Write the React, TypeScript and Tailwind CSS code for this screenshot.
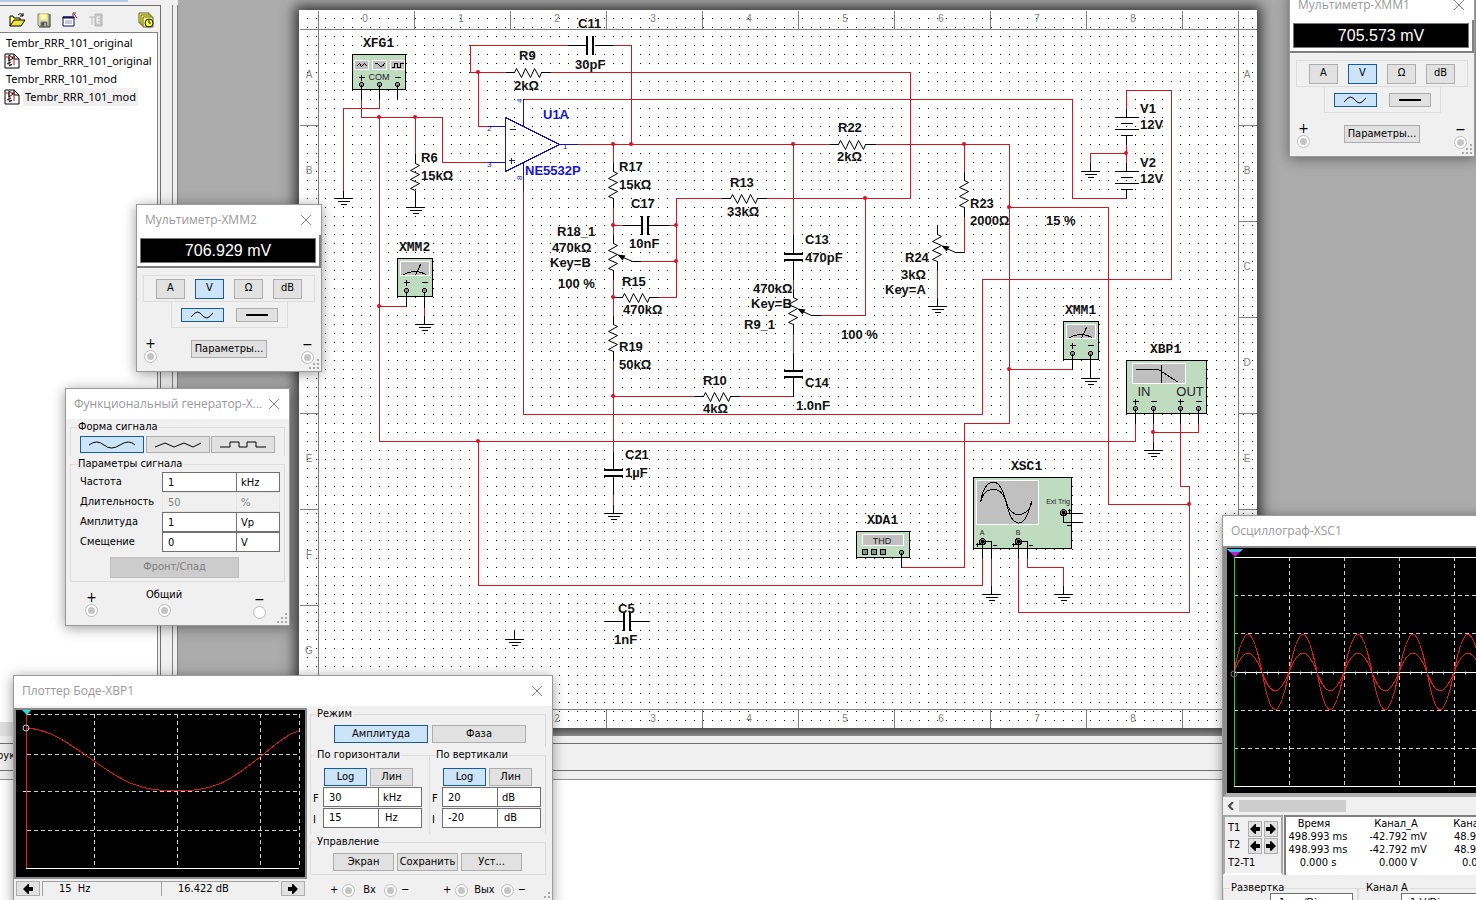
import type { ReactNode } from 'react';

const wires = [
  'M361 99V117H442V162H487',
  'M379 99V108H343V190',
  'M379 117V441H1135V423',
  'M415 117V153',
  'M567 45H470V72H505',
  'M613 45H631V144',
  'M478 72V126H487',
  'M550 72H910V198H766',
  'M523 99H1072V198H1126',
  'M523 190V414H982V279H1171V90H1126V108',
  'M577 144H829',
  'M875 144H1009V423H964V567H901',
  'M613 144V162',
  'M613 207V234',
  'M613 225H622',
  'M668 225H676',
  'M613 279V315',
  'M658 297H676V198H721',
  'M640 261H676',
  'M613 360V451',
  'M613 494V504',
  'M613 396H694',
  'M739 396H793',
  'M793 144V234',
  'M793 279V288',
  'M793 334V352',
  'M820 315H865V198',
  'M964 144V171',
  'M964 216V252',
  'M937 270V297',
  'M1009 207H1108V504H1189',
  'M1009 369H1072',
  'M1126 144V162',
  'M1126 153H1090V162',
  'M379 306H406',
  'M424 307V315',
  'M1153 423V441',
  'M1153 432H1198V423',
  'M1180 423V486H1189V612H1018V558',
  'M478 441V585H982V558',
  'M991 558V585',
  'M1027 558V567H1063V585',
];

const leads = [
  'M361 84V99M379 84V99M397 84V99',
  'M343 190V198M415 153V163M415 190V207',
  'M567 45H587M594 45H613',
  'M505 72H514M541 72H550',
  'M613 162V171M613 198V207',
  'M622 225H642M649 225H668',
  'M613 234V243M613 270V279M613 297H622M649 297H658',
  'M613 315V324M613 351V360',
  'M613 451V470M613 477V494M613 504V513',
  'M721 198H730M757 198H766M694 396H703M730 396H739',
  'M793 234V254M793 261V279M793 288V297M793 324V334M793 352V371M793 378V396',
  'M829 144H838M865 144H875',
  'M964 171V180M964 207V216M937 225V234M937 261V270M937 297V306',
  'M1126 108V117M1126 135V144M1126 162V171M1126 189V198M1090 162V171',
  'M1114 117H1138M1120 123H1132M1114 129H1138M1120 135H1132',
  'M1114 171H1138M1120 177H1132M1114 183H1138M1120 189H1132',
  'M406 291V306M424 291V307M424 315V324',
  'M1072 353V369M1090 353V378',
  'M1135 408V423M1153 408V423M1153 441V450M1180 408V423M1198 408V423',
  'M901 552V567',
  'M982 541V558M982 541H991V558M991 585V594',
  'M1018 541V558M1018 541H1027V558M1063 585V594',
  'M1063 513H1082M1063 513V522H1082',
  'M604 621H624M631 621H649M514 630V639',
];

const junctions = [
  [379, 117], [415, 117], [478, 72], [613, 144], [631, 144], [793, 144], [964, 144],
  [613, 225], [676, 225], [676, 261], [613, 297], [613, 396], [865, 198], [1009, 207],
  [1009, 369], [1126, 153], [379, 306], [478, 441], [1153, 432], [1189, 504],
];

const grounds = [
  [343, 198], [415, 207], [613, 513], [514, 639], [937, 306], [1090, 171], [424, 324],
  [1090, 378], [1153, 450], [991, 594], [1063, 594],
];

const horizontalResistors = [[514, 72], [622, 297], [730, 198], [703, 396], [838, 144]];
const verticalResistors = [[415, 163], [613, 171], [613, 243], [613, 324], [793, 297], [964, 180], [937, 234]];

const labels: [number, number, string][] = [
  [578, 28, 'C11'], [575, 69, '30pF'], [519, 60, 'R9'], [514, 90, '2kΩ'],
  [421, 162, 'R6'], [421, 180, '15kΩ'], [619, 171, 'R17'], [619, 189, '15kΩ'],
  [631, 208, 'C17'], [629, 248, '10nF'], [557, 236, 'R18_1'], [552, 252, '470kΩ'],
  [550, 267, 'Key=B'], [558, 288, '100 %'], [622, 286, 'R15'], [623, 314, '470kΩ'],
  [619, 351, 'R19'], [619, 369, '50kΩ'], [703, 385, 'R10'], [703, 413, '4kΩ'],
  [805, 387, 'C14'], [796, 410, '1.0nF'], [744, 329, 'R9_1'], [751, 308, 'Key=B'],
  [753, 293, '470kΩ'], [805, 244, 'C13'], [805, 262, '470pF'], [841, 339, '100 %'],
  [905, 262, 'R24'], [901, 279, '3kΩ'], [885, 294, 'Key=A'], [730, 187, 'R13'],
  [727, 216, '33kΩ'], [838, 132, 'R22'], [837, 161, '2kΩ'], [970, 208, 'R23'],
  [970, 225, '2000Ω'], [1046, 225, '15 %'], [1140, 113, 'V1'], [1140, 129, '12V'],
  [1140, 167, 'V2'], [1140, 183, '12V'], [625, 459, 'C21'], [625, 477, '1µF'],
  [618, 613, 'C5'], [614, 644, '1nF'],
];

const instrumentLabels: [number, number, string][] = [
  [363, 47, 'XFG1'], [399, 251, 'XMM2'], [1065, 314, 'XMM1'],
  [1150, 353, 'XBP1'], [1011, 470, 'XSC1'], [867, 524, 'XDA1'],
];

const columns = [0, 1, 2, 3, 4, 5, 6, 7, 8];
const rows = ['A', 'B', 'C', 'D', 'E', 'F', 'G'];

function Port({ x, y }: { x: number; y: number }) {
  return <path d={`M${x - 2} ${y - 1}l1 -1h2l1 1v2l-1 1h-2l-1 -1z`} fill="#909090" stroke="#000" />;
}

function Jack({ x, y }: { x: number; y: number }) {
  return (
    <g>
      <circle cx={x} cy={y} r="3" fill="#808080" stroke="#000" />
      <circle cx={x} cy={y} r="1" stroke="#000" fill="#000" />
    </g>
  );
}

function Screen({ x, y, w, h }: { x: number; y: number; w: number; h: number }) {
  return <rect x={x} y={y} width={w} height={h} fill="#c0c0c0" stroke="#fff" />;
}

function Plus({ x, y }: { x: number; y: number }) {
  return <path d={`M${x - 3} ${y}h6M${x} ${y - 3}v6`} stroke="#000" />;
}

function Minus({ x, y }: { x: number; y: number }) {
  return <path d={`M${x - 3} ${y}h6`} stroke="#000" />;
}

function MeterSymbol({ x, y }: { x: number; y: number }) {
  return (
    <g>
      <rect x={x} y={y} width="35" height="38" fill="#c0dcc0" stroke="#000" />
      <Screen x={x + 3} y={y + 3} w={29} h={14} />
      <path d={`M${x + 6} ${y + 16}q11 -6 23 0M${x + 18} ${y + 17}l5 -11`} stroke="#000" fill="none" />
      <Plus x={x + 9} y={y + 24} />
      <Minus x={x + 27} y={y + 24} />
      <Port x={x + 9} y={y + 32} />
      <Port x={x + 27} y={y + 32} />
    </g>
  );
}

function Schematic() {
  return (
    <svg viewBox="299 10 958 718" className="block h-[718px] w-[958px]" fontFamily='"Liberation Sans", Arial, sans-serif'>
      <defs>
        <pattern id="dots" x="1" y="0" width="9" height="9" patternUnits="userSpaceOnUse">
          <rect width="1" height="1" fill="#000" />
        </pattern>
      </defs>
      <rect x="299" y="10" width="958" height="718" fill="#fff" />
      <rect x="299" y="10" width="958" height="718" fill="url(#dots)" />

      {/* Sheet frame with zone marks */}
      <g transform="translate(.5 .5)" stroke="#808080" shapeRendering="crispEdges">
        <path d="M299 29H1257M299 709H1257M318 10V727M1238 10V727" />
        {columns.map((c) => (
          <path key={c} d={`M${414 + c * 96} 10V29M${414 + c * 96} 709V727`} />
        ))}
        {rows.map((r, i) => (
          <path key={r} d={`M299 ${125 + i * 96}H318M1238 ${125 + i * 96}H1257`} />
        ))}
      </g>
      <g fill="#808080" fontSize="10" textAnchor="middle">
        {columns.map((c) => (
          <g key={c}>
            <text x={365 + c * 96} y="22">{c}</text>
            <text x={365 + c * 96} y="722">{c}</text>
          </g>
        ))}
        {rows.map((r, i) => (
          <g key={r}>
            <text x="309" y={78 + i * 96}>{r}</text>
            <text x="1247" y={78 + i * 96}>{r}</text>
          </g>
        ))}
      </g>

      {/* Instruments */}
      <g transform="translate(.5 .5)" fill="none" shapeRendering="crispEdges">
        <rect x="352" y="54" width="53" height="35" fill="#c0dcc0" stroke="#000" />
        <Screen x={354} y={60} w={14} h={9} />
        <Screen x={372} y={60} w={14} h={9} />
        <Screen x={390} y={60} w={14} h={9} />
        <path d="M356 66l3 -3 2 3 3 -3 3 3M374 64q2 -3 4 0 3 4 6 -1M391 67h3v-4h3v4h3v-4h3" stroke="#000" />
        <Plus x={361} y={77} />
        <Minus x={397} y={77} />
        <Port x={361} y={84} />
        <Port x={379} y={84} />
        <Port x={397} y={84} />

        <MeterSymbol x={397} y={258} />
        <MeterSymbol x={1063} y={321} />

        <rect x="1126" y="360" width="80" height="53" fill="#c0dcc0" stroke="#000" />
        <Screen x={1132} y={363} w={53} h={20} />
        <path d="M1135 369H1158L1178 382M1161 364V382" stroke="#000" />
        <Plus x={1135} y={401} />
        <Minus x={1153} y={401} />
        <Plus x={1180} y={401} />
        <Minus x={1198} y={401} />
        <Port x={1135} y={408} />
        <Port x={1153} y={408} />
        <Port x={1180} y={408} />
        <Port x={1198} y={408} />

        <rect x="973" y="477" width="98" height="71" fill="#c0dcc0" stroke="#000" />
        <Screen x={976} y={480} w={62} h={44} />
        <path
          d="M980 502C984 478 998 473 1005 499C1011 529 1024 531 1031 501M980 502C983 487 998 483 1005 499C1010 520 1027 517 1031 503"
          stroke="#000"
        />
        <Jack x={1063} y={512} />
        <Jack x={982} y={541} />
        <Jack x={1018} y={541} />
        <path d="M975 544h4M977 542v4M992 545h4M1011 544h4M1013 542v4M1028 545h4M1067 510h4M1069 508v4M1066 525h4" stroke="#000" />

        <rect x="856" y="531" width="53" height="26" fill="#c0dcc0" stroke="#000" />
        <Screen x={862} y={534} w={41} h={11} />
        <path d="M862 549h5v5h-5zM871 549h5v5h-5zM880 549h5v5h-5z" fill="#909090" stroke="#000" />
        <Port x={901} y={552} />
      </g>
      <g textAnchor="middle" fill="#222">
        <text x="379" y="80" fontSize="9">COM</text>
        <text x="1144" y="396" fontSize="13">IN</text>
        <text x="1190" y="396" fontSize="13">OUT</text>
        <text x="1058" y="504" fontSize="7">Ext Trig</text>
        <text x="982" y="535" fontSize="7">A</text>
        <text x="1018" y="535" fontSize="7">B</text>
        <text x="882" y="544" fontSize="9">THD</text>
      </g>

      {/* Wires and parts */}
      <g transform="translate(.5 .5)" fill="none" shapeRendering="crispEdges">
        <path d={wires.join('')} stroke="#cf1820" />
        <path d={leads.join('')} stroke="#000" />
        {grounds.map(([x, y]) => (
          <path key={`${x}-${y}`} d={`M${x - 9} ${y}h18M${x - 6} ${y + 3}h12M${x - 3} ${y + 6}h6`} stroke="#000" />
        ))}
        <path d="M505 117V171L559 144ZM487 126H505M487 162H505M559 144H577M523 99V126M523 162V190" stroke="#1414b4" />
        <path d="M509 129h6M508 160h6M511 157v6" stroke="#1414b4" />
      </g>
      <g transform="translate(.5 .5)" fill="none" stroke="#000">
        {horizontalResistors.map(([x, y]) => (
          <path key={`${x}-${y}`} d={`M${x} ${y}l2 -4 5 9 4 -9 5 9 4 -9 5 9 2 -5`} />
        ))}
        {verticalResistors.map(([x, y]) => (
          <path key={`${x}-${y}`} d={`M${x} ${y}l4 2 -9 5 9 4 -9 5 9 4 -9 5 5 2`} />
        ))}
        <path d="M640 261H632L618 255M820 315H811L798 309M964 252H955L942 246" />
        <path d="M617 254l8 1 -3 5zM797 308l8 1 -3 5zM941 245l8 1 -3 5z" fill="#000" stroke="none" />
      </g>
      <path
        d="M586 36h2v19h-2zM592 36h2v19h-2zM641 216h2v19h-2zM647 216h2v19h-2zM604 469h19v2h-19zM604 475h19v2h-19zM784 253h19v2h-19zM784 259h19v2h-19zM784 370h19v2h-19zM784 376h19v2h-19zM623 612h2v19h-2zM629 612h2v19h-2z"
        fill="#000"
      />
      {junctions.map(([x, y]) => (
        <circle key={`${x}-${y}`} cx={x} cy={y} r="2" fill="#e01020" />
      ))}

      <g fontSize="13" fontWeight="bold" fill="#111">
        {labels.map(([x, y, text]) => (
          <text key={`${x}-${y}`} x={x} y={y}>{text}</text>
        ))}
      </g>
      <g fontSize="13" fontWeight="bold" fill="#1414dc">
        <text x="543" y="119">U1A</text>
        <text x="525" y="175">NE5532P</text>
      </g>
      <g fontSize="8" fill="#1414dc">
        <text x="487" y="131">2</text>
        <text x="487" y="167">3</text>
        <text x="563" y="149">1</text>
        <text x="-103" y="522" transform="rotate(-90)">4</text>
        <text x="-180" y="522" transform="rotate(-90)">8</text>
      </g>
      <g fontSize="13" fontWeight="bold" fill="#111" fontFamily='"Liberation Mono", "Courier New", monospace'>
        {instrumentLabels.map(([x, y, text]) => (
          <text key={text} x={x} y={y}>{text}</text>
        ))}
      </g>
    </svg>
  );
}

function Window({ title, className, children }: { title: string; className: string; children: ReactNode }) {
  return (
    <section className={`absolute flex flex-col border border-[#9a9a9a] bg-[#f0f0f0] shadow-[0_2px_12px_rgba(0,0,0,0.4)] ${className}`}>
      <header className="flex h-[30px] shrink-0 items-center justify-between bg-white px-2">
        <h2 className="whitespace-nowrap font-['Open_Sans','Noto_Sans',sans-serif] text-xs text-[#999]">{title}</h2>
        <button aria-label="Закрыть">
          <svg viewBox="0 0 14 14" className="size-[14px]" fill="none" stroke="#808080">
            <path d="M2 2l10 10M12 2L2 12" />
          </svg>
        </button>
      </header>
      {children}
    </section>
  );
}

function Button({ active, className = '', label, children }: { active?: boolean; className?: string; label?: string; children: ReactNode }) {
  return (
    <button
      aria-label={label}
      aria-pressed={active}
      className={`flex shrink-0 items-center justify-center whitespace-nowrap border ${
        active ? 'border-[#1a5a96] bg-[#cce4f7]' : 'border-[#adadad] bg-[#e1e1e1]'
      } ${className}`}
    >
      {children}
    </button>
  );
}

function LeftArrow() {
  return (
    <svg viewBox="0 0 10 10" className="h-[10px] w-[10px]" fill="#000">
      <path d="M0 5l5 -5h1v3h4v4H6v3H5z" />
    </svg>
  );
}

function RightArrow() {
  return (
    <svg viewBox="0 0 10 10" className="h-[10px] w-[10px]" fill="#000">
      <path d="M10 5l-5 -5H4v3H0v4h4v3h1z" />
    </svg>
  );
}

function Terminal({ label, empty }: { label: string; empty?: boolean }) {
  return (
    <input
      type="radio"
      aria-label={label}
      className={`block size-[11px] shrink-0 appearance-none rounded-full border-2 border-white outline outline-[#bdbdbd] ${
        empty ? 'bg-white' : 'bg-[#c4c4c4]'
      }`}
    />
  );
}

function Grip() {
  return (
    <svg viewBox="0 0 12 12" className="absolute bottom-0 right-0 size-3" fill="#a8a8a8">
      <path d="M8 0h2v2h-2zM4 4h2v2h-2zM8 4h2v2h-2zM0 8h2v2h-2zM4 8h2v2h-2zM8 8h2v2h-2z" />
    </svg>
  );
}

function Multimeter({ name, value, className }: { name: string; value: string; className: string }) {
  return (
    <Window title={`Мультиметр-${name}`} className={`w-[186px] ${className}`}>
      <div className="border-b-2 border-r-2 border-[#808080] bg-white p-[3px]">
        <output className="flex h-[25px] items-center justify-center border border-[#777] bg-black font-['Liberation_Sans',Arial,sans-serif] text-base text-white">
          {value}
        </output>
      </div>
      <div className="px-[6px] pt-[7px]">
        <div className="flex h-[27px] items-center justify-center gap-[10px] border border-[#dcdcdc]">
          <Button className="h-5 w-[29px]">A</Button>
          <Button className="h-5 w-[29px]" active>V</Button>
          <Button className="h-5 w-[29px]">Ω</Button>
          <Button className="h-5 w-[29px]">dB</Button>
        </div>
        <div className="mx-auto flex h-[26px] w-[117px] items-center justify-center gap-3 border border-t-0 border-[#dcdcdc]">
          <Button className="h-[14px] w-[43px]" label="Переменный ток" active>
            <svg viewBox="0 0 22 8" className="h-2 w-[22px]" fill="none" stroke="#000">
              <path d="M0 6l4 -4q2 -2 5 0l4 4q3 2 5 0l4 -4" />
            </svg>
          </Button>
          <Button className="h-[14px] w-[42px]" label="Постоянный ток">
            <span className="h-[2px] w-[22px] bg-black" />
          </Button>
        </div>
      </div>
      <div className="flex items-start justify-between px-2 pb-2 pt-[7px]">
        <div className="flex flex-col items-center text-sm/4">
          <span>+</span>
          <Terminal label="Плюс" />
        </div>
        <Button className="mt-[5px] h-[18px] w-[76px]">Параметры...</Button>
        <div className="flex flex-col items-center pt-[1px] text-sm/4">
          <span>−</span>
          <Terminal label="Минус" />
        </div>
      </div>
      <Grip />
    </Window>
  );
}

const generatorRows = [
  { label: 'Частота', value: '1', unit: 'kHz' },
  { label: 'Длительность', value: '50', unit: '%', disabled: true },
  { label: 'Амплитуда', value: '1', unit: 'Vp' },
  { label: 'Смещение', value: '0', unit: 'V' },
];

const fieldStyle = 'h-5 min-w-0 border border-[#707070] bg-white disabled:border-[#e4e4e4] disabled:bg-[#f0f0f0] disabled:text-[#808080]';

function Generator() {
  return (
    <Window title="Функциональный генератор-X..." className="left-[65px] top-[388px] w-[225px]">
      <div className="px-1">
        <fieldset className="border border-b-0 border-[#dcdcdc] px-[9px]">
          <legend className="-ml-[3px] px-px leading-4">Форма сигнала</legend>
          <div className="flex justify-between pb-[3px] pt-[1px]">
            <Button className="h-[17px] w-16" label="Синус" active>
              <svg viewBox="0 0 46 8" className="h-2 w-[46px]" fill="none" stroke="#000">
                <path d="M0 4q8 -6 15 0t16 0t15 0" />
              </svg>
            </Button>
            <Button className="h-[17px] w-16" label="Треугольник">
              <svg viewBox="0 0 46 8" className="h-2 w-[46px]" fill="none" stroke="#000">
                <path d="M0 6l10 -4 9 4 10 -4 9 4 8 -4" />
              </svg>
            </Button>
            <Button className="h-[17px] w-16" label="Меандр">
              <svg viewBox="0 0 46 8" className="h-2 w-[46px]" fill="none" stroke="#000">
                <path d="M0 6h10v-5h9v5h8v-5h9v5h10" />
              </svg>
            </Button>
          </div>
        </fieldset>
        <fieldset className="border border-[#dcdcdc] pb-[3px] pl-[9px] pr-1">
          <legend className="-ml-[3px] px-px leading-4">Параметры сигнала</legend>
          {generatorRows.map((row) => (
            <div key={row.label} className="flex items-center">
              <label htmlFor={row.label} className="w-[82px] shrink-0">{row.label}</label>
              <input id={row.label} defaultValue={row.value} disabled={row.disabled} className={`${fieldStyle} w-[75px] pl-[5px]`} />
              <input aria-label={`${row.label}, единицы`} defaultValue={row.unit} disabled={row.disabled} className={`${fieldStyle} -ml-px w-11 pl-1`} />
            </div>
          ))}
          <button disabled className="ml-[30px] mt-[5px] block h-[21px] w-[129px] border border-[#bfbfbf] bg-[#ccc] text-[#808080]">
            Фронт/Спад
          </button>
        </fieldset>
      </div>
      <div className="flex h-[43px] items-start pl-5 pr-6 pt-[5px]">
        <div className="flex flex-col items-center pt-[2px] text-sm/4">
          <span>+</span>
          <Terminal label="Плюс" />
        </div>
        <div className="ml-[49px] flex flex-col items-center gap-[2px]">
          <span className="leading-4">Общий</span>
          <Terminal label="Общий" />
        </div>
        <div className="ml-auto flex flex-col items-center pt-1 text-sm/4">
          <span>−</span>
          <Terminal label="Минус" empty />
        </div>
      </div>
      <Grip />
    </Window>
  );
}

function AxisControls({ title, top, bottom }: { title: string; top: [string, string]; bottom: [string, string] }) {
  return (
    <fieldset className="flex-1 border-r border-t border-[#dcdcdc] pl-[2px] first:w-[119px] first:flex-none">
      <legend className="ml-[3px] px-px leading-4">{title}</legend>
      <div className="flex gap-[3px] pl-[11px] pt-[5px]">
        <Button className="h-[18px] w-[43px]" active>Log</Button>
        <Button className="h-[18px] w-[43px]">Лин</Button>
      </div>
      <div className="flex pt-[1px]">
        <label className="w-[10px] shrink-0 pt-1" htmlFor={`${title}-F`}>F</label>
        <input id={`${title}-F`} defaultValue={top[0]} className={`${fieldStyle} w-14 pl-[5px]`} />
        <input aria-label="Единицы F" defaultValue={top[1]} className={`${fieldStyle} -ml-px w-11 pl-1`} />
      </div>
      <div className="flex pb-[6px]">
        <label className="w-[10px] shrink-0 pt-1" htmlFor={`${title}-I`}>I</label>
        <input id={`${title}-I`} defaultValue={bottom[0]} className={`${fieldStyle} w-14 pl-[5px]`} />
        <input aria-label="Единицы I" defaultValue={bottom[1]} className={`${fieldStyle} -ml-px w-11 pl-[6px]`} />
      </div>
    </fieldset>
  );
}

function BodePlotter() {
  return (
    <Window title="Плоттер Боде-XBP1" className="left-[13px] top-[675px] h-[230px] w-[540px]">
      <div className="flex">
        <div className="w-[293px] shrink-0 pt-[2px]">
          <div className="border-2 border-[#8a8a8a] bg-black">
            <svg viewBox="16 710 289 167" className="block h-[167px] w-full" fill="none">
              <g stroke="#d0d0d0" strokeDasharray="4 3" shapeRendering="crispEdges">
                <path d="M27 714H299M27 754H299M27 791H299M27 830H299M94 714V868M177 714V868M260 714V868M299 714V868" />
              </g>
              <path d="M26 868H299M23 791H27" stroke="#fff" shapeRendering="crispEdges" />
              <path d="M26 712h1v156h-1z" fill="#f01818" />
              <path
                d="M26 728C50 729 68 743 94 761C125 783 140 791 177 791C215 791 230 781 260 757C275 745 287 734 299 731"
                stroke="#e01414"
                shapeRendering="crispEdges"
              />
              <path d="M22 710h9l-4 5z" fill="#20e0e0" />
              <circle cx="26" cy="728" r="3" stroke="#a0e0e0" />
            </svg>
          </div>
          <div className="flex items-center pb-1 pt-[2px]">
            <Button className="ml-[2px] h-[15px] w-6" label="Курсор влево">
              <LeftArrow />
            </Button>
            <output className="ml-[2px] h-[15px] w-[119px] border-l border-t border-[#a0a0a0] pl-4 leading-[14px] whitespace-pre">15  Hz</output>
            <output className="h-[15px] flex-1 border-l border-t border-[#a0a0a0] pl-4 leading-[14px]">16.422 dB</output>
            <Button className="mr-[2px] ml-[2px] h-[15px] w-6" label="Курсор вправо">
              <RightArrow />
            </Button>
          </div>
        </div>
        <div className="flex-1 pl-[3px] pr-[6px]">
          <fieldset className="border border-b-0 border-[#dcdcdc] pb-1">
            <legend className="ml-[5px] px-px leading-4">Режим</legend>
            <div className="flex gap-1 pl-[23px] pt-[3px]">
              <Button className="h-[18px] w-[94px]" active>Амплитуда</Button>
              <Button className="h-[18px] w-[94px]">Фаза</Button>
            </div>
          </fieldset>
          <div className="flex border-l border-[#dcdcdc]">
            <AxisControls title="По горизонтали" top={['30', 'kHz']} bottom={['15', 'Hz']} />
            <AxisControls title="По вертикали" top={['20', 'dB']} bottom={['-20', 'dB']} />
          </div>
          <fieldset className="border border-[#dcdcdc] pb-[3px]">
            <legend className="ml-[5px] px-px leading-4">Управление</legend>
            <div className="flex gap-[3px] pl-[22px] pt-[3px]">
              <Button className="h-[18px] w-[61px]">Экран</Button>
              <Button className="h-[18px] w-[61px]">Сохранить</Button>
              <Button className="h-[18px] w-[61px]">Уст...</Button>
            </div>
          </fieldset>
          <div className="flex items-center justify-between pl-5 pr-[20px] pt-[7px]">
            <div className="flex items-center gap-[5px]">
              <span>+</span>
              <Terminal label="Вход плюс" />
              <span className="px-1">Вх</span>
              <Terminal label="Вход минус" />
              <span>−</span>
            </div>
            <div className="flex items-center gap-[5px]">
              <span>+</span>
              <Terminal label="Выход плюс" />
              <span className="px-[2px]">Вых</span>
              <Terminal label="Выход минус" />
              <span>−</span>
            </div>
          </div>
        </div>
      </div>
      <Grip />
    </Window>
  );
}

function sinePath(amplitude: number) {
  let d = 'M1234 672';
  for (let i = 0; i < 8; i++) {
    const x = 1234 + i * 55;
    d += `C${x + 10} ${672 - amplitude * 1.32} ${x + 18} ${672 - amplitude * 1.32} ${x + 28} 672`;
    d += `C${x + 37} ${672 + amplitude * 1.32} ${x + 45} ${672 + amplitude * 1.32} ${x + 55} 672`;
  }
  return d;
}

const readings = [
  ['498.993 ms', '-42.792 mV', '48.973 mV'],
  ['498.993 ms', '-42.792 mV', '48.973 mV'],
  ['0.000 s', '0.000 V', '0.000 V'],
];

function Oscilloscope() {
  return (
    <Window title="Осциллограф-XSC1" className="left-[1222px] top-[515px] h-[460px] w-[420px]">
      <div className="border-4 border-r-0 border-t-2 border-[#8a8a8a] border-b-[#b0b0b0] bg-black">
        <svg viewBox="1227 548 400 245" className="block h-[245px] w-[400px]" fill="none">
          <g stroke="#d0d0d0" strokeDasharray="4 3" shapeRendering="crispEdges">
            <path d="M1234 595H1620M1234 633H1620M1234 710H1620M1234 748H1620M1289 557V786M1344 557V786M1399 557V786M1454 557V786M1509 557V786" />
          </g>
          <path d="M1234 557H1620M1234 786H1620M1234 672H1620" stroke="#fff" shapeRendering="crispEdges" />
          <path d="M1234 673H1620" stroke="#ddd" strokeDasharray="1 10" strokeWidth="3" />
          <path d={sinePath(38)} stroke="#e81818" shapeRendering="crispEdges" />
          <path d={sinePath(19)} stroke="#e81818" shapeRendering="crispEdges" />
          <path d="M1234 557h1v229h-1z" fill="#30d040" />
          <path d="M1227 549h16l-8 8z" fill="#c020d0" />
          <path d="M1227 549h16l-3 3h-10z" fill="#40c0f0" />
          <circle cx="1234" cy="674" r="3" stroke="#a050a0" />
        </svg>
      </div>
      <div className="flex h-[18px] items-center">
        <button aria-label="Прокрутить влево" className="w-4">
          <svg viewBox="0 0 8 8" className="mx-auto size-2" fill="none" stroke="#444" strokeWidth="2">
            <path d="M6 0L2 4l4 4" />
          </svg>
        </button>
        <div className="h-3 w-[107px] bg-[#cdcdcd]" />
      </div>
      <div className="flex h-[60px]">
        <div className="flex w-[60px] shrink-0 flex-col border-2 border-[#a8a8a8] border-b-white px-[3px] pt-[3px]">
          {['T1', 'T2'].map((cursor) => (
            <div key={cursor} className="flex h-[17px] items-center gap-[2px]">
              <span className="w-[19px]">{cursor}</span>
              <Button className="h-4 w-[14px]" label={`${cursor} влево`}>
                <LeftArrow />
              </Button>
              <Button className="h-4 w-[14px]" label={`${cursor} вправо`}>
                <RightArrow />
              </Button>
            </div>
          ))}
          <span className="pt-[1px]">T2-T1</span>
        </div>
        <div className="ml-[1px] flex-1 border-l-2 border-t-2 border-[#808080] bg-white">
          <table className="w-[230px] table-fixed text-center leading-[13px]">
            <thead>
              <tr>
                <th className="w-[64px] p-0 pr-2 font-normal">Время</th>
                <th className="w-[96px] p-0 pr-1 font-normal">Канал_A</th>
                <th className="w-[70px] p-0 pr-3 font-normal">Канал_B</th>
              </tr>
            </thead>
            <tbody>
              {readings.map((row, i) => (
                <tr key={i}>
                  {row.map((cell, j) => (
                    <td key={j} className="p-0 whitespace-nowrap">{cell}</td>
                  ))}
                </tr>
              ))}
            </tbody>
          </table>
        </div>
      </div>
      <div className="flex pt-[5px]">
        <fieldset className="w-[135px] border border-[#dcdcdc] pl-[46px] pb-2">
          <legend className="-ml-10 px-px leading-4">Развертка</legend>
          <input aria-label="Шкала развертки" defaultValue="1 ms/Div" className="-mt-[3px] block h-[18px] w-[83px] border border-[#707070] bg-white pl-2" />
        </fieldset>
        <fieldset className="flex-1 border border-[#dcdcdc] pl-[42px] pb-2">
          <legend className="-ml-9 px-px leading-4">Канал A</legend>
          <input aria-label="Шкала канала A" defaultValue="1 V/Div" className="-mt-[3px] block h-[18px] w-[100px] border border-[#707070] bg-white pl-2" />
        </fieldset>
      </div>
    </Window>
  );
}

function SheetIcon() {
  return (
    <svg viewBox="0 0 16 16" className="size-4 shrink-0" fill="#fff" stroke="#000">
      <path d="M1 1h9l5 5v9H1z" />
      <path d="M10 1v5h5" fill="none" />
      <path d="M1 4h4v8h3M10 3v9M8 4h3" stroke="#c01818" fill="none" />
      <path d="M5 2l4 3 -4 3zM3 11l4 -2M5 13l3 -2" fill="none" />
    </svg>
  );
}

function DesignToolbox() {
  return (
    <aside className="flex w-[178px] shrink-0 flex-col bg-[#f0f0f0]">
      <div className="mb-[3px] h-[2px] w-32 bg-[#b5cde4]" />
      <div className="flex min-h-0 flex-1">
        <div className="flex w-[161px] flex-col border-r border-t border-[#707070]">
          <div className="flex h-[26px] items-center gap-[10px] pl-[9px] pt-[2px]">
            <button aria-label="Открыть">
              <svg viewBox="0 0 17 16" className="h-4 w-[17px]" fill="#ffff80" stroke="#000">
                <path d="M1 14V4h3l1 2h6v2" />
                <path d="M1 14l4 -6h11l-4 6z" fill="#e8e840" />
                <path d="M9 3q3 -3 5 1M14 1v3h-3" fill="none" />
              </svg>
            </button>
            <button aria-label="Сохранить">
              <svg viewBox="0 0 16 16" className="size-4" fill="#d8d8c8" stroke="#808068">
                <path d="M2 2h11v12H3l-1 -1z" />
                <path d="M4 2h7v6H4z" fill="#ffffa0" stroke="#e0e090" />
                <path d="M5 10h6v4H5z" fill="#505050" />
                <path d="M9 11v3" stroke="#fff" />
                <path d="M14 2v13H3" stroke="#303020" fill="none" />
              </svg>
            </button>
            <button aria-label="Свойства">
              <svg viewBox="0 0 16 16" className="size-4" fill="#fff" stroke="#101050">
                <path d="M1 5h11v9H1z" />
                <path d="M1 5h11v1H1z" fill="#101050" />
                <path d="M3 9h7M3 11h7" stroke="#9090c0" />
                <path d="M15 6l-3 -4M11 4V1h3" stroke="#902030" fill="none" />
              </svg>
            </button>
            <button aria-label="Переименовать" disabled>
              <svg viewBox="0 0 16 16" className="size-4" fill="none" stroke="#b8b8b8">
                <path d="M1 5h6M4 5v8" />
                <path d="M7 2h7v12H7z" fill="#c4c4c4" />
                <path d="M12 5H9v6h3M9 8h3" stroke="#fff" />
              </svg>
            </button>
            <button aria-label="История" className="ml-[24px]">
              <svg viewBox="0 0 16 16" className="size-4" fill="#ffff80" stroke="#606010">
                <path d="M1 1h10v10H1z" />
                <path d="M3 3h10v10H3z" />
                <path d="M5 5h10v10H5z" />
                <circle cx="11" cy="11" r="4" fill="#ffff30" stroke="#101040" />
                <path d="M11 8v3h2" stroke="#101040" fill="none" />
              </svg>
            </button>
          </div>
          <ul className="mr-[2px] flex-1 border-r border-t border-[#808080] bg-white pt-[1px] font-['Noto_Sans','Open_Sans',sans-serif] text-[11px]">
            <li className="h-[18px] pl-[6px] leading-[18px]">Tembr_RRR_101_original</li>
            <li className="flex h-[18px] items-center gap-[5px] pl-1 leading-[18px]">
              <SheetIcon />
              <span>Tembr_RRR_101_original</span>
            </li>
            <li className="h-[18px] pl-[6px] leading-[18px]">Tembr_RRR_101_mod</li>
            <li className="flex h-[18px] items-center gap-[3px] pl-1 leading-[18px]">
              <SheetIcon />
              <span className="bg-[#f0f0f0] px-[2px]">Tembr_RRR_101_mod</span>
            </li>
          </ul>
          <div className="h-[14px] bg-[#e0e0e0]" />
        </div>
        <div className="ml-[11px] w-[6px] border-x border-[#808080] bg-[#f0f0f0]" />
      </div>
    </aside>
  );
}

export default function App() {
  return (
    <div className="relative flex h-screen flex-col overflow-hidden bg-[#f0f0f0] font-['DejaVu_Sans_Condensed','Noto_Sans',sans-serif] text-[11px] text-black">
      <div className="flex min-h-0 flex-1">
        <DesignToolbox />
        <main className="flex-1 overflow-hidden bg-[#ababab] pl-[121px] pt-[10px]">
          <div className="w-[958px] shadow-[0_0_12px_4px_#333]">
            <Schematic />
          </div>
        </main>
      </div>

      {/* Spreadsheet view */}
      <footer className="flex h-[164px] shrink-0 flex-col pt-[7px]">
        <div className="h-[28px] border-y border-[#707070] leading-6">
          <span className="-ml-[3px]">рук</span>
        </div>
        <div className="mt-2 flex-1 border-t border-[#909090] bg-white" />
      </footer>

      <Multimeter name="XMM2" value="706.929 mV" className="left-[136px] top-[204px]" />
      <Multimeter name="XMM1" value="705.573 mV" className="left-[1289px] top-[-11px]" />
      <Generator />
      <BodePlotter />
      <Oscilloscope />
    </div>
  );
}
